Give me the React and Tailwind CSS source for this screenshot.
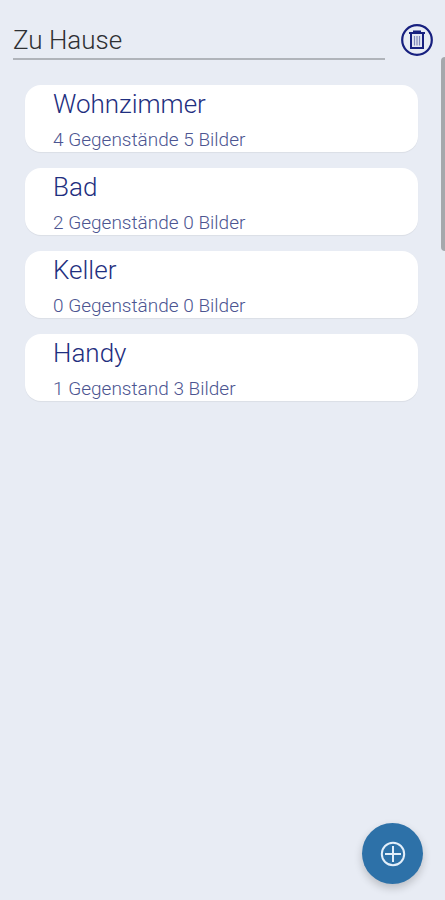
import React, { useState } from "react";

const initialRooms = [
  { id: 1, name: "Wohnzimmer", items: 4, pictures: 5 },
  { id: 2, name: "Bad", items: 2, pictures: 0 },
  { id: 3, name: "Keller", items: 0, pictures: 0 },
  { id: 4, name: "Handy", items: 1, pictures: 3 },
];

function TrashIcon() {
  return (
    <svg viewBox="0 0 32 32" className="h-8 w-8" fill="none" stroke="#17207f" aria-hidden="true">
      <circle cx="16" cy="16" r="14.8" strokeWidth="2.2" />
      <path d="M10 9h12v15H10z" fill="#e3e6f2" strokeWidth="2" />
      <path d="M13.5 12v9.5M16 12v9.5M18.5 12v9.5" stroke="#7d86b8" strokeWidth="1.2" />
      <path d="M8 9h16M12 7.5h8" strokeWidth="2" />
    </svg>
  );
}

function PlusIcon() {
  return (
    <svg viewBox="0 0 26 26" className="h-[26px] w-[26px]" fill="none" stroke="#e3effa" aria-hidden="true">
      <circle cx="13" cy="13" r="11.2" strokeWidth="2" />
      <path d="M13 5v16M5 13h16" strokeWidth="2" />
    </svg>
  );
}

function RoomCard({ room }) {
  return (
    <li>
      <button
        type="button"
        className="block w-full rounded-2xl bg-white px-7 pt-1 text-left shadow-[0_1px_1px_rgba(0,0,0,0.06)]"
      >
        <span className="block text-[26px] leading-[30px] text-[#1f2f80]">{room.name}</span>
        <span className="mt-[9px] block text-[19px] leading-6 text-[#4c5591]">
          {room.items} {room.items === 1 ? "Gegenstand" : "Gegenstände"} {room.pictures} Bilder
        </span>
      </button>
    </li>
  );
}

function App() {
  const [place, setPlace] = useState("Zu Hause");
  const [rooms] = useState(initialRooms);

  return (
    <div className="min-h-screen bg-[#e8ecf4] font-['Roboto',sans-serif] font-light">
      <header className="flex items-center gap-4 pt-5 pr-3 pl-[13px]">
        <input
          type="text"
          aria-label="Ort"
          value={place}
          onChange={(e) => setPlace(e.target.value)}
          className="h-10 min-w-0 flex-1 border-b-2 border-[#b0b4ba] bg-transparent pt-0.5 text-[26px] text-[#2e3033] outline-none"
        />
        <button type="button" aria-label="Ort löschen" className="shrink-0">
          <TrashIcon />
        </button>
      </header>

      <main className="pt-[25px] pr-[27px] pb-24 pl-[25px]">
        <ul className="flex flex-col gap-4">
          {rooms.map((room) => (
            <RoomCard key={room.id} room={room} />
          ))}
        </ul>
      </main>

      {/* Scroll indicator */}
      <div className="fixed top-[57px] right-0 h-[194px] w-1 rounded-l-sm bg-[#a5a8ac]" />

      <button
        type="button"
        aria-label="Raum hinzufügen"
        className="fixed right-[22px] bottom-4 flex h-[61px] w-[61px] items-center justify-center rounded-full bg-[#2d71a8] shadow-[0_4px_8px_rgba(0,0,0,0.2)]"
      >
        <PlusIcon />
      </button>
    </div>
  );
}

export default App;
